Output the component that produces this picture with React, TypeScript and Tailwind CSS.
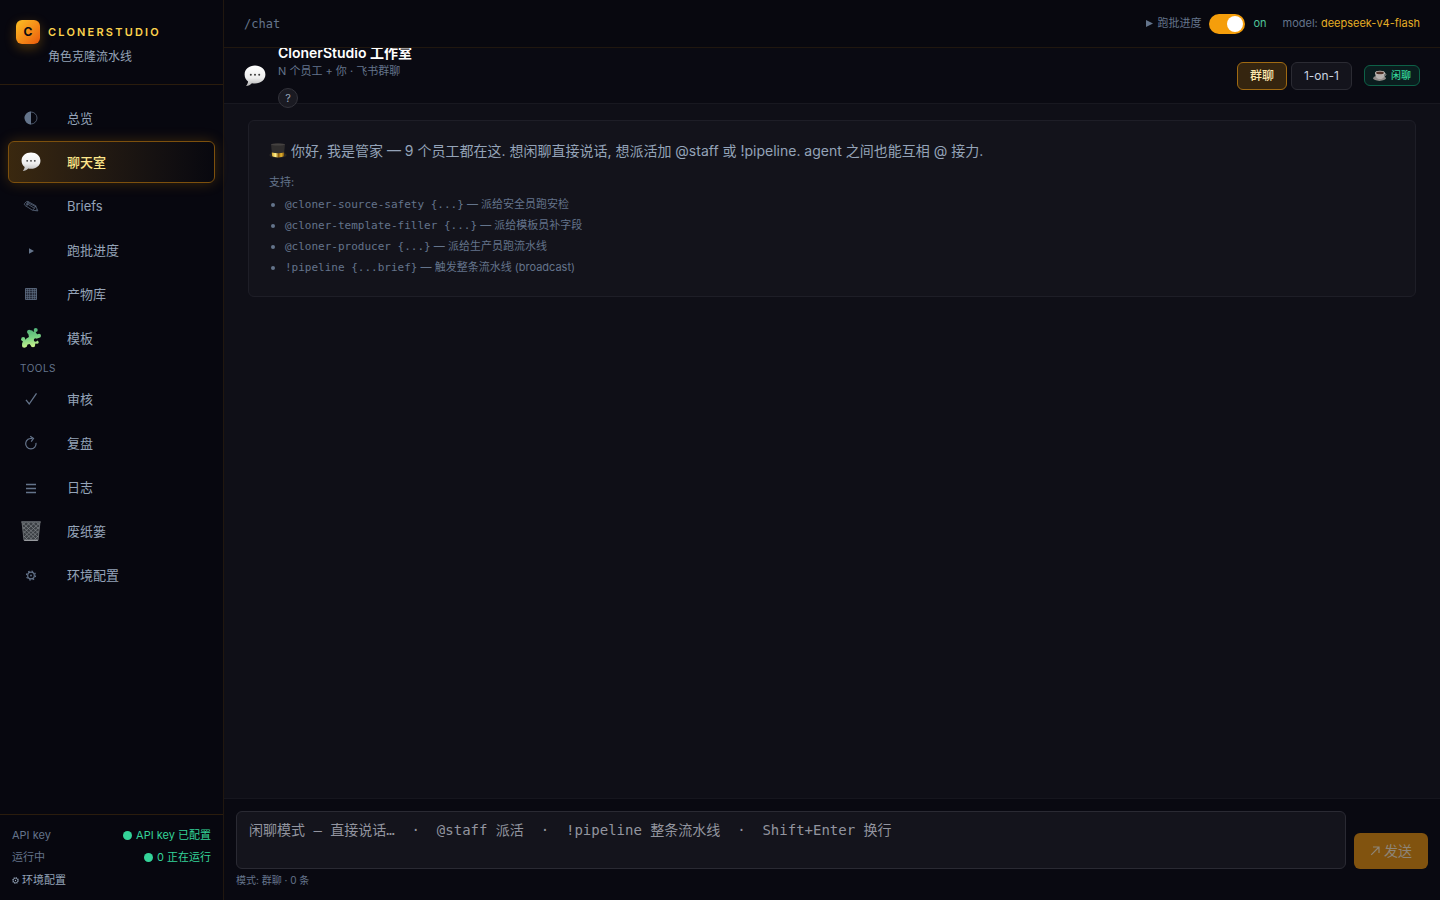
import { useState } from 'react'
import type { ReactNode } from 'react'

const SANS = "font-['Inter','Noto_Sans_CJK_SC',sans-serif]"
const MONO = "font-['DejaVu_Sans_Mono','Noto_Sans_CJK_SC',monospace]"

function ChatBubble({ size }: { size: number }) {
  return (
    <svg width={size} height={size} viewBox="0 0 22 22" aria-hidden="true">
      <defs>
        <linearGradient id="bubble" x1="0" y1="0" x2="0" y2="1">
          <stop offset="0" stopColor="#ffffff" />
          <stop offset="0.6" stopColor="#ededed" />
          <stop offset="1" stopColor="#b4b4b4" />
        </linearGradient>
      </defs>
      <path d="M11 .6C5.200.6.6 4.300.6 9.500c0 3.300 1.600 5.600 3.500 7-.2 1.600-.9 3-2.100 4.500 2.500-.2 4.500-1.300 5.900-2.800 1 .2 2 .3 3.100.3 5.800 0 10.400-3.800 10.400-9S16.800.6 11 .6Z" fill="url(#bubble)" />
      <circle cx="6.800" cy="9.700" r="1" fill="#3a3a3a" />
      <circle cx="11" cy="9.700" r="1" fill="#3a3a3a" />
      <circle cx="15.200" cy="9.700" r="1" fill="#3a3a3a" />
    </svg>
  )
}

function Glyph({ children }: { children: ReactNode }) {
  return (
    <svg width="20" height="20" viewBox="0 0 20 20" fill="none" stroke="currentColor" strokeWidth="1" aria-hidden="true">
      {children}
    </svg>
  )
}

const Gear = () => (
  <>
    <circle cx="10" cy="10.500" r="3.300" strokeWidth="1.200" />
    <circle cx="10" cy="10.500" r="4.500" strokeWidth="1.200" strokeDasharray="1.600 1.934" />
    <circle cx="10" cy="10.500" r="0.900" fill="currentColor" stroke="none" />
  </>
)

const NAV: { label: string; icon: ReactNode }[] = [
  {
    label: '总览',
    icon: (
      <Glyph>
        <circle cx="10" cy="10" r="6" strokeWidth="0.700" />
        <path d="M10 3.600a6.400 6.400 0 0 0 0 12.800Z" fill="currentColor" stroke="none" />
      </Glyph>
    ),
  },
  { label: '聊天室', icon: <ChatBubble size={20} /> },
  {
    label: 'Briefs',
    icon: (
      <Glyph>
        <g strokeWidth="0.700">
          <path d="M3.600 7.500 5.200 5.800c.5-.5 1.200-.6 1.800-.3l7.600 4.200 2.300 5.200-5.500-.7-7.200-4.600c-.8-.6-1.100-1.400-.6-2.100Z" />
          <path d="m5 9.100 1.900-3.500M5.800 9.900l2-3.800M5.800 7.600l7.600 4.700M7.600 7.200l7.300 3.500M11.600 14.200l1.800-1.900 1.400-2.600M14.600 14.500l1.500-1" />
        </g>
      </Glyph>
    ),
  },
  { label: '跑批进度', icon: <Glyph><path d="M8 8.200v5.600l5-2.800Z" fill="currentColor" stroke="none" /></Glyph> },
  {
    label: '产物库',
    icon: (
      <Glyph>
        <path d="M4.500 4.500h11v11h-11Z" fill="currentColor" fillOpacity="0.350" strokeWidth="0.800" />
        <path d="M6.500 4.500v11M8.500 4.500v11M11.500 4.500v11M13.500 4.500v11M4.500 6.500h11M4.500 8.500h11M4.500 11.500h11M4.500 13.500h11" strokeWidth="0.500" />
      </Glyph>
    ),
  },
  {
    label: '模板',
    icon: (
      <svg width="20" height="20" viewBox="0 0 20 20" aria-hidden="true">
        <defs>
          <linearGradient id="puzzle" gradientUnits="userSpaceOnUse" x1="8" y1="0" x2="11" y2="20">
            <stop offset="0" stopColor="#4cae78" />
            <stop offset="0.500" stopColor="#79d183" />
            <stop offset="1" stopColor="#d3f78d" />
          </linearGradient>
          <mask id="notches">
            <path d="M0 0h20v20H0Z" fill="#fff" />
            <circle cx="6" cy="8.300" r="1.800" fill="#000" />
            <circle cx="14.500" cy="12" r="1.700" fill="#000" />
          </mask>
        </defs>
        <g fill="url(#puzzle)" mask="url(#notches)">
          <path d="M6.300 3.500 11 2.200l1.200 1.600 1.800-.8 2 3.200 3 1-.8 2.600-2.700.9-.7 4.600-2 3.500-2.600-.8-1.600-2-2 .6-1.100 2.300L1.800 19 1 16l1.300-4.300 2.600-.3 1.300-2.200L7.600 7Z" />
          <circle cx="8.200" cy="3.900" r="2.100" />
          <circle cx="14.700" cy="2.100" r="2" />
          <circle cx="18" cy="7.700" r="2" />
          <circle cx="2.200" cy="11.200" r="2.100" />
          <circle cx="3.300" cy="17.500" r="2.200" />
          <circle cx="12" cy="17" r="2.200" />
          <circle cx="16" cy="14.200" r="1.600" />
        </g>
      </svg>
    ),
  },
]

const TOOLS: { label: string; icon: ReactNode }[] = [
  { label: '审核', icon: <Glyph><path d="m5 10.800 3.200 4.200L15.500 4.300" strokeWidth="1.300" /></Glyph> },
  {
    label: '复盘',
    icon: (
      <Glyph>
        <path d="M15 9.900a5.200 5.200 0 1 1-3.700-4.200" strokeWidth="1.200" />
        <path d="m9.200 3.300 3.300 2.200-2.300 3.200" strokeWidth="1.200" />
      </Glyph>
    ),
  },
  { label: '日志', icon: <Glyph><path d="M5 7.500h10M5 11.500h10M5 15.500h10" strokeWidth="1.300" /></Glyph> },
  {
    label: '废纸篓',
    icon: (
      <svg width="20" height="20" viewBox="0 0 20 20" aria-hidden="true">
        <path d="M.8 1h18.400L17 19.800H3Z" fill="#3a3e43" />
        <path
          d="m1.500 4 3-2.500M2 8l7-6.500M2.500 12 14 1.500M3 16 18.500 2M4.500 18.500 18 6M9 18.500 17.500 10M13.500 18.500 17 15M18.500 4l-3-2.500M18 8l-7-6.500M17.500 12 6 1.500M17 16 1.500 2M15.500 18.500 2 6M11 18.500 2.500 10M6.500 18.500 3 15"
          stroke="#85898e" strokeWidth="0.700" fill="none"
        />
        <path d="M1 1 3 19.400M19 1 17 19.400" stroke="#767a7e" strokeWidth="0.800" />
        <path d="M.3.900h19.400" stroke="#6a6e73" strokeWidth="1.400" />
        <path d="M3.200 19.300h13.600" stroke="#a5a8ac" strokeWidth="1.200" />
      </svg>
    ),
  },
  { label: '环境配置', icon: <Glyph><Gear /></Glyph> },
]

const COMMANDS = [
  { cmd: '@cloner-source-safety {...}', desc: '派给安全员跑安检' },
  { cmd: '@cloner-template-filler {...}', desc: '派给模板员补字段' },
  { cmd: '@cloner-producer {...}', desc: '派给生产员跑流水线' },
  { cmd: '!pipeline {...brief}', desc: '触发整条流水线 (broadcast)' },
]

function NavItem({ label, icon, active }: { label: string; icon: ReactNode; active: boolean }) {
  return (
    <a
      href="#"
      aria-current={active ? 'page' : undefined}
      className={`flex h-[42px] items-center gap-[26px] rounded-md border px-3 text-[13px] ${
        active
          ? 'border-[#7d500d] bg-linear-to-r from-[#3a280f] to-[#08080f] font-medium text-[#fde68a] shadow-[0_0_14px_rgba(245,158,11,0.22)]'
          : 'border-transparent text-[#94a3b8]'
      }`}
    >
      <span className={`w-5 shrink-0 ${active ? '' : 'text-[#64748b]'}`}>{icon}</span>
      <span className="pt-0.5">{label}</span>
    </a>
  )
}

function Sidebar() {
  return (
    <aside className="flex w-56 shrink-0 flex-col border-r border-[#20170f] bg-[#07070f]">
      <div className="flex h-[85px] flex-col border-b border-[#2a1c0d] px-4 pt-5">
        <div className="flex items-center gap-2">
          <span className="flex size-6 items-center justify-center rounded-md bg-linear-to-br from-[#fbbf24] to-[#ea580c] text-xs font-bold text-[#0a0a12] shadow-[0_4px_12px_rgba(245,158,11,0.3)]">
            C
          </span>
          <span className="text-[11px] font-semibold tracking-[0.2em] text-[#fcd34d]">CLONERSTUDIO</span>
        </div>
        <div className="pl-8 text-xs leading-[26px] text-[#94a3b8]">角色克隆流水线</div>
      </div>

      <nav className="flex flex-1 flex-col gap-0.5 px-2 pt-3">
        {NAV.map(item => <NavItem key={item.label} {...item} active={item.label === '聊天室'} />)}
        <div className="pl-3 text-[10px] leading-[15px] tracking-wider text-[#64748b]">TOOLS</div>
        {TOOLS.map(item => <NavItem key={item.label} {...item} active={false} />)}
      </nav>

      <div className="flex flex-col gap-[6px] border-t border-[#2a1c0d] px-3 pt-3 pb-[11px] text-[11px] leading-4 text-[#64748b]">
        <div className="flex items-center justify-between">
          <span>API key</span>
          <span className="flex items-center gap-1 text-[#34d399]">
            <span className="size-[9px] rounded-full bg-[#34d399]" />
            API key 已配置
          </span>
        </div>
        <div className="flex items-center justify-between">
          <span>运行中</span>
          <span className="flex items-center gap-1 text-[#34d399]">
            <span className="size-[9px] rounded-full bg-[#34d399]" />
            0 正在运行
          </span>
        </div>
        <a href="#" className="flex items-center gap-[3px] leading-[18px] text-[#94a3b8]">
          <svg width="7" height="7" viewBox="5 5.500 10 10" fill="none" stroke="currentColor" aria-hidden="true"><Gear /></svg>
          环境配置
        </a>
      </div>
    </aside>
  )
}

export default function App() {
  const [running, setRunning] = useState(true)
  const [mode, setMode] = useState<'group' | 'single'>('group')
  const [draft, setDraft] = useState('')

  const modeClass = (on: boolean) =>
    on ? 'border-[#a06a12] bg-[#35250f] font-medium text-[#fde8b0]' : 'border-[#2b2b33] bg-[#14141c] text-[#cbd5e1]'

  return (
    <div className={`flex h-screen bg-[#0f0f17] text-[#94a3b8] ${SANS}`}>
      <Sidebar />

      <main className="flex min-w-0 flex-1 flex-col">
        {/* top bar */}
        <header className="z-10 flex h-12 shrink-0 items-center justify-between border-b border-[#20170f] bg-[#08080f] px-5 text-[11px]">
          <span className={`text-xs text-[#64748b] ${MONO}`}>/chat</span>
          <div className="flex items-center gap-4 text-[#64748b]">
            <label className="flex items-center gap-2">
              <span className="flex items-center gap-1">
                <svg width="7" height="7" viewBox="0 0 7 7" fill="currentColor" aria-hidden="true"><path d="M0 0v7l7-3.500Z" /></svg>
                跑批进度
              </span>
              <input
                type="checkbox"
                checked={running}
                onChange={e => setRunning(e.target.checked)}
                className="h-5 w-9 appearance-none rounded-full bg-slate-700 p-0.5 before:block before:size-4 before:rounded-full before:bg-white checked:bg-[#f59e0b] checked:pl-[18px]"
              />
              <span className="text-[#4fc49a]">{running ? 'on' : 'off'}</span>
            </label>
            <span>model: <span className="text-[#e5ae25]">deepseek-v4-flash</span></span>
          </div>
        </header>

        {/* room header */}
        <div className="flex h-14 shrink-0 items-center justify-between border-b border-[#181820] bg-[#0a0a12] px-5">
          <div className="flex items-center gap-3">
            <ChatBubble size={22} />
            <div>
              <h1 className="text-sm leading-5 font-semibold text-white">ClonerStudio 工作室</h1>
              <p className="text-[11px] leading-4 text-[#64748b]">N 个员工 + 你 · 飞书群聊</p>
              <button className="mt-[9px] flex size-5 items-center justify-center rounded-full border border-[#33333b] bg-[#1a1a22] text-[11px] text-[#94a3b8]">
                ?
              </button>
            </div>
          </div>
          <div className="flex items-center gap-3 text-xs">
            <div className="flex gap-1">
              <button onClick={() => setMode('group')} className={`h-7 rounded-md border px-3 ${modeClass(mode === 'group')}`}>群聊</button>
              <button onClick={() => setMode('single')} className={`h-7 rounded-md border px-3 ${modeClass(mode === 'single')}`}>1-on-1</button>
            </div>
            <span className="flex h-[21px] items-center gap-1 rounded-md border border-[#0d6147] bg-[#0a1d1e] px-2 text-[10px] font-medium text-[#34d399]">
              <svg width="14" height="12" viewBox="0 0 14 12" aria-hidden="true">
                <ellipse cx="6.500" cy="8.200" rx="6.300" ry="2.700" fill="#8f8b88" />
                <path d="M11 3.500c2.300-.8 2.800 2.400-.4 3" fill="none" stroke="#a9a5a1" strokeWidth="0.900" />
                <path d="M2.200 2.700c0 4 1.600 6.300 4.800 6.300s4.800-2.300 4.800-6.300Z" fill="#b5b1ad" />
                <ellipse cx="7" cy="2.700" rx="4.800" ry="2" fill="#cdc9c5" />
                <ellipse cx="7" cy="2.900" rx="3.900" ry="1.400" fill="#4d3026" />
              </svg>
              闲聊
            </span>
          </div>
        </div>

        {/* messages */}
        <div className="min-h-0 flex-1 px-6 py-4">
          <div className="rounded-md border border-[#1e1e27] bg-[#13131b] p-5 pb-[18px]">
            <p className="flex items-center gap-1 text-sm leading-5 text-[#94a3b8]">
              <svg width="18" height="16" viewBox="0 0 18 16" className="shrink-0" aria-hidden="true">
                <defs>
                  <linearGradient id="band" x1="0" y1="0" x2="1" y2="0">
                    <stop offset="0" stopColor="#d9a92b" />
                    <stop offset="0.300" stopColor="#fff08e" />
                    <stop offset="0.550" stopColor="#8a5a0b" />
                    <stop offset="0.750" stopColor="#e8b730" />
                    <stop offset="1" stopColor="#7c520c" />
                  </linearGradient>
                </defs>
                <ellipse cx="9" cy="12" rx="8.700" ry="3" fill="#2b2825" />
                <path d="M2 1.200c4-1 10-1 14 0l-1.200 11.600c-3 1.500-8.600 1.500-11.600 0Z" fill="#302e2e" />
                <path d="M2.800 9.500c3.700 1 8.700 1 12.400 0l-.4 3.800c-3 1.500-8.600 1.500-11.600 0Z" fill="url(#band)" />
                <ellipse cx="9" cy="1.500" rx="7" ry="0.900" fill="#454241" />
              </svg>
              你好, 我是管家 — 9 个员工都在这. 想闲聊直接说话, 想派活加 @staff 或 !pipeline. agent 之间也能互相 @ 接力.
            </p>
            <div className="mt-[11px] text-[11px] leading-[21px] text-[#64748b]">
              <p>支持:</p>
              <ul className="mt-px list-disc pl-4">
                {COMMANDS.map(c => (
                  <li key={c.cmd}>
                    <code className={MONO}>{c.cmd}</code> — {c.desc}
                  </li>
                ))}
              </ul>
            </div>
          </div>
        </div>

        {/* composer */}
        <div className="border-t border-[#16161e] bg-[#090911] px-3 pt-3 pb-3">
          <div className="flex items-end gap-2">
            <textarea
              aria-label="闲聊模式"
              value={draft}
              onChange={e => setDraft(e.target.value)}
              placeholder="闲聊模式 — 直接说话…  ·  @staff 派活  ·  !pipeline 整条流水线  ·  Shift+Enter 换行"
              className={`h-[58px] flex-1 resize-none rounded-md border border-[#2a2a33] bg-[#14141c] px-3 py-2 text-sm text-slate-200 outline-none placeholder:text-[#92949f] ${MONO}`}
            />
            <button
              disabled={!draft}
              className="flex h-9 items-center gap-1 rounded-md bg-amber-500 px-4 text-sm text-slate-200 disabled:bg-[#81530f] disabled:text-[#8e8577]"
            >
              <svg width="10" height="10" viewBox="0 0 10 10" fill="none" stroke="currentColor" strokeWidth="1.200" aria-hidden="true">
                <path d="M1.200 8.800 9 1M3 1h6v6" />
              </svg>
              发送
            </button>
          </div>
          <p className="mt-1 text-[10px] leading-[15px] text-[#64748b]">模式: {mode === 'group' ? '群聊' : '1-on-1'} · 0 条</p>
        </div>
      </main>
    </div>
  )
}
